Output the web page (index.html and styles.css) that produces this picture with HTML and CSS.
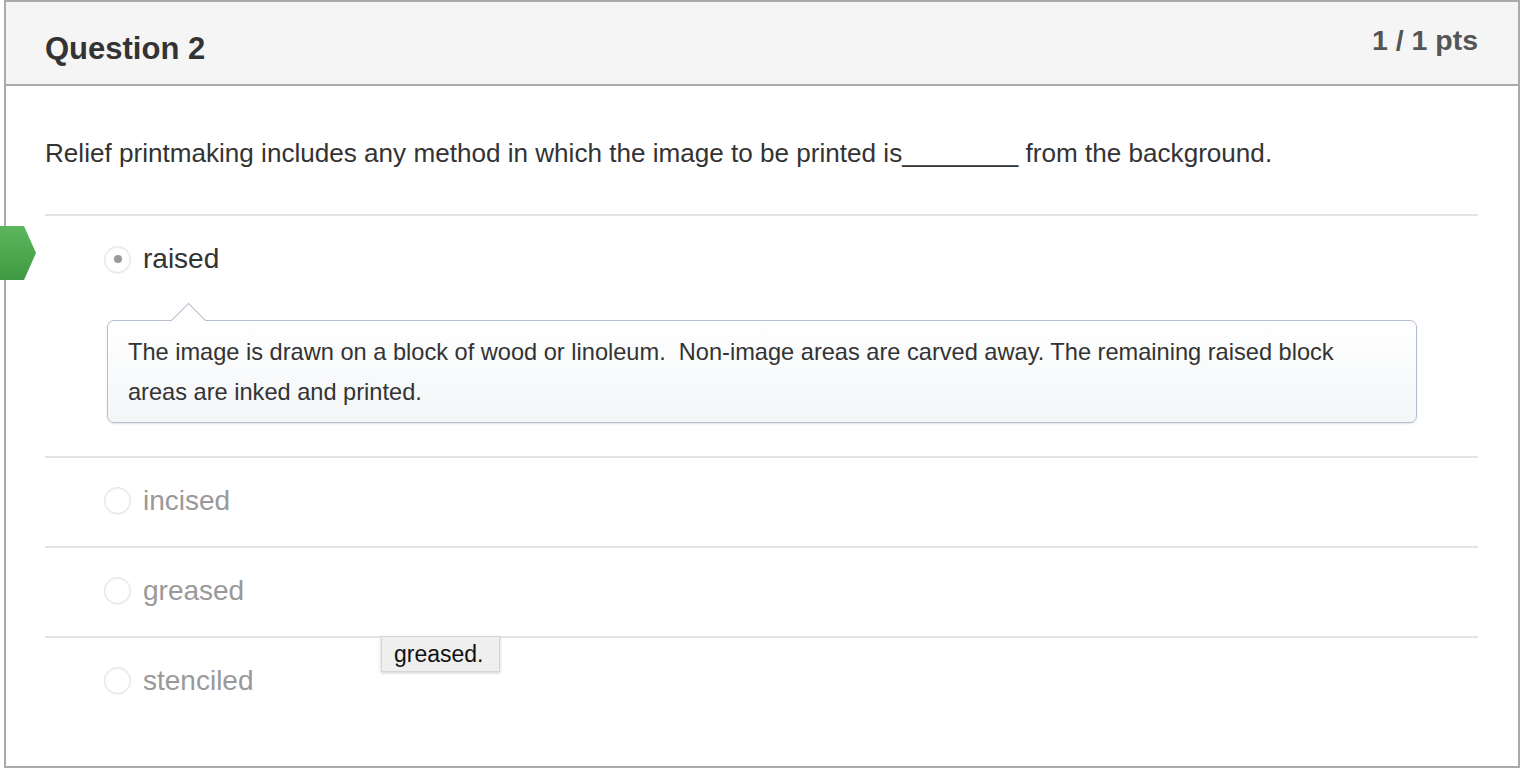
FILE: index.html
```html
<!DOCTYPE html>
<html>
<head>
<meta charset="utf-8">
<link rel="stylesheet" href="styles.css">
</head>
<body>
<div class="page">
  <div class="question">
    <div class="q-header">
      <h2 class="q-title">Question 2</h2>
      <div class="q-points">1 / 1 pts</div>
    </div>
    <div class="q-body">
      <p class="q-text">Relief printmaking includes any method in which the image to be printed is________ from the background.</p>
      <div class="answers">
        <div class="answer answer-selected">
          <div class="answer-row">
            <span class="radio radio-checked"></span>
            <span class="answer-label">raised</span>
          </div>
          <div class="comment">
            <span class="comment-arrow"></span>
            <p class="comment-text">The image is drawn on a block of wood or linoleum.&nbsp; Non-image areas are carved away. The remaining raised block areas are inked and printed.</p>
          </div>
        </div>
        <div class="answer">
          <div class="answer-row">
            <span class="radio"></span>
            <span class="answer-label muted">incised</span>
          </div>
        </div>
        <div class="answer">
          <div class="answer-row">
            <span class="radio"></span>
            <span class="answer-label muted">greased</span>
          </div>
        </div>
        <div class="answer">
          <div class="answer-row">
            <span class="radio"></span>
            <span class="answer-label muted">stenciled</span>
          </div>
        </div>
      </div>
    </div>
  </div>
  <div class="correct-marker"></div>
  <div class="hover-tip">greased.</div>
</div>
</body>
</html>
```

FILE: styles.css
```css
html, body {
  margin: 0;
  padding: 0;
  background: #fff;
}

body {
  font-family: "Liberation Sans", Arial, Helvetica, sans-serif;
  color: #333;
}

.page {
  position: relative;
  width: 1520px;
  height: 768px;
  overflow: hidden;
}

.question {
  margin-left: 4px;
  width: 1512px;
  height: 764px;
  border: 2px solid #aaaaaa;
  background: #fff;
}

.q-header {
  display: flex;
  justify-content: space-between;
  align-items: flex-start;
  height: 82px;
  background: #f5f5f5;
  border-bottom: 2px solid #aaaaaa;
  padding: 0 40px 0 39px;
}

.q-title {
  margin: 0;
  padding-top: 29px;
  font-size: 31px;
  line-height: 36px;
  font-weight: bold;
  color: #333;
}

.q-points {
  padding-top: 22px;
  font-size: 28.5px;
  line-height: 32px;
  font-weight: bold;
  color: #555;
}

.q-body {
  padding: 0 40px 0 39px;
}

.q-text {
  margin: 0;
  padding: 52px 0 46px;
  font-size: 26.1px;
  line-height: 30px;
  color: #333;
}

.answers {
  display: flex;
  flex-direction: column;
}

.answer {
  border-top: 2px solid #e4e4e4;
}

.answer-row {
  display: flex;
  align-items: center;
  gap: 12px;
  height: 88px;
  padding-left: 59px;
  padding-bottom: 3px;
  box-sizing: border-box;
}

.answer-selected .answer-row {
  height: 86px;
  padding-bottom: 0;
}

.radio {
  width: 25px;
  height: 25px;
  border: 1px solid #e3e3e3;
  border-radius: 50%;
  box-shadow: inset 0 1px 2px rgba(0,0,0,0.07), 0 1px 1px rgba(0,0,0,0.05);
  background: #fff;
  display: flex;
  align-items: center;
  justify-content: center;
  flex: none;
}

.radio-checked::after {
  content: "";
  width: 8px;
  height: 8px;
  border-radius: 50%;
  background: #9a9a9a;
}

.answer-label {
  font-size: 28px;
  line-height: 30px;
  color: #333;
}

.answer-label.muted {
  color: #999;
}

.comment {
  position: relative;
  margin: 18px 60px 33px 62px;
  width: 1310px;
  box-sizing: border-box;
  border: 1px solid #b3bfcc;
  border-radius: 7px;
  background: linear-gradient(#ffffff, #f3f5f7);
  box-shadow: 0 1px 2px rgba(0,0,0,0.12);
  padding: 11px 32px 10px 20px;
}

.comment-arrow {
  position: absolute;
  left: 68px;
  top: -13px;
  width: 24px;
  height: 24px;
  background: #fff;
  border-top: 1px solid #b3bfcc;
  border-left: 1px solid #b3bfcc;
  transform: rotate(45deg);
}

.comment-text {
  position: relative;
  margin: 0;
  font-size: 23.6px;
  line-height: 40px;
  color: #333;
}

.correct-marker {
  position: absolute;
  left: 0;
  top: 226px;
  width: 36px;
  height: 54px;
  background: linear-gradient(#5bb65d, #3f9b43);
  clip-path: polygon(0 0, 24px 0, 36px 27px, 24px 54px, 0 54px);
}

.hover-tip {
  position: absolute;
  left: 381px;
  top: 636px;
  width: 119px;
  height: 36px;
  box-sizing: border-box;
  background: #efefef;
  border: 1px solid #d6d6d6;
  box-shadow: 0 1px 3px rgba(0,0,0,0.2);
  font-size: 23px;
  line-height: 34px;
  color: #111;
  padding-left: 12px;
}
```
